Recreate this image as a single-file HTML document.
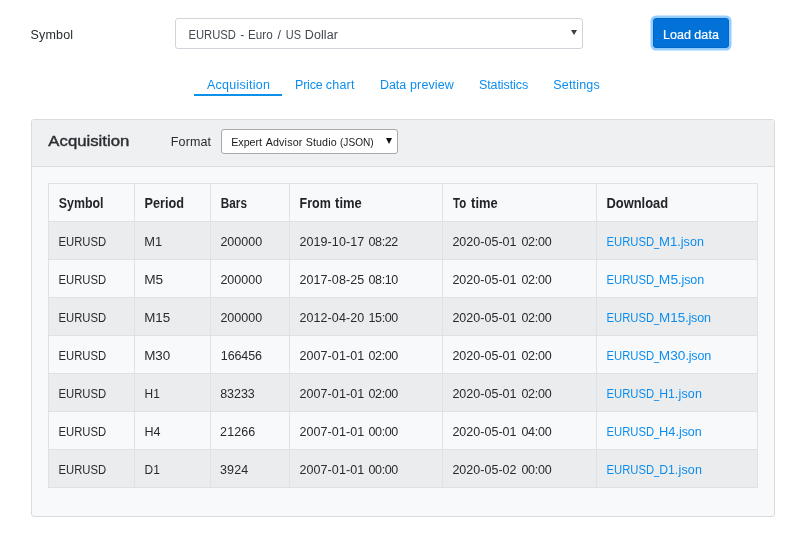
<!DOCTYPE html>
<html lang="en">
<head>
<meta charset="utf-8">
<title>Historical data</title>
<style>
*{box-sizing:border-box}
html,body{margin:0;padding:0}
body{width:806px;height:536px;background:#fff;will-change:transform;font-family:"Liberation Sans",sans-serif;font-size:12.5px;color:#272b2f;position:relative;overflow:hidden}
.ln{white-space:pre;line-height:20px}
.s{display:inline}
.x{display:inline-block;transform-origin:0 50%}
form,nav,h5,label{margin:0;padding:0;display:block}
.top>*,.tabs>*,.card,.hd>*,table{position:absolute}
.lbl{left:0;top:25px}
.sel{left:175px;top:18px;width:408px;height:31px;border:1px solid #ced4da;border-radius:3px;background:#fff;padding-top:6px;color:#424950}
.arr{position:absolute;right:5px;top:11px;width:0;height:0;border-left:3px solid transparent;border-right:3px solid transparent;border-top:5.5px solid #3b4046}
.btn{left:653px;top:18px;width:76px;height:30px;border:1px solid #0068c9;border-radius:3px;background:#0272d8;color:#fff;-webkit-text-stroke:.2px #fff;padding-top:6px;box-shadow:0 0 0 2.5px rgba(45,155,255,.5)}
.tab{top:70px;height:26px;padding-top:5px;color:#0b8df0;border-bottom:2px solid transparent}
.tab.on{border-bottom-color:#0c90ea}
.t1{left:194px;width:88px}
.t2{left:282px;width:85px}
.t3{left:367px;width:100px}
.t4{left:467px;width:74px}
.t5{left:541px;width:72px}
.card{left:31px;top:119px;width:744px;height:398px;border:1px solid #d9dbdd;border-radius:3px;background:#f8f9fa}
.hd{position:absolute;left:0;top:0;right:0;height:47px;background:#eff0f1;border-bottom:1px solid #d9dbdd;border-radius:2px 2px 0 0}
.ttl{left:0;top:11px;font-size:15px;font-weight:400;color:#2a2e32;-webkit-text-stroke:.4px #2a2e32}
.fl{left:0;top:12px}
.fsel{left:189px;top:9px;width:177px;height:25px;border:1px solid #a9a9a9;border-radius:3px;background:#fff;font-size:10.7px;padding-top:2px;color:#1a1a1a}
.fsel .arr{right:5px;top:8px;border-left-width:3.2px;border-right-width:3.2px;border-top:6px solid #111}
table{left:16px;top:63px;width:709px;border-collapse:collapse;table-layout:fixed}
.c1{width:86px}.c2{width:76px}.c3{width:79px}.c4{width:153px}.c5{width:154px}.c6{width:161px}
th,td{border:1px solid #dee2e6;height:38px;padding:10px 0 0 0;text-align:left;vertical-align:top}
th{font-weight:700;color:#212529;font-size:13.8px}
tbody tr:nth-child(odd){background:#ebeced}
a{color:#0b8df0;text-decoration:none}
</style>
</head>
<body>
<form class="top">
  <label class="lbl ln"><span class="s" style="letter-spacing:0.17px;margin-left:30.56px">Symbol</span></label>
  <div class="sel ln"><span class="s x" style="transform:translateX(0.52px) scaleX(0.898);margin-left:12.24px">EURUSD </span><span class="s x" style="transform:translateX(0.36px) scaleX(0.953);margin-left:-4.38px">- </span><span class="s x" style="transform:scaleX(0.933);margin-left:0.24px">Euro </span><span class="s" style="margin-left:-0.34px">/ </span><span class="s x" style="transform:translateX(1.82px) scaleX(0.878);margin-left:-0.33px">US </span><span class="s" style="letter-spacing:0.1px;margin-left:-0.28px">Dollar</span><i class="arr"></i></div>
  <div class="btn ln"><span class="s" style="letter-spacing:0.04px;margin-left:9px">Load </span><span class="s" style="letter-spacing:0.12px;margin-left:-0.23px">data</span></div>
</form>
<nav class="tabs">
  <a class="tab ln t1 on"><span class="s" style="letter-spacing:0.24px;margin-left:13.04px">Acquisition</span></a>
  <a class="tab ln t2"><span class="s" style="letter-spacing:-0.21px;margin-left:13.04px">Price </span><span class="s" style="letter-spacing:0.19px;margin-left:0.1px">chart</span></a>
  <a class="tab ln t3"><span class="s" style="letter-spacing:-0.08px;margin-left:12.97px">Data </span><span class="s" style="letter-spacing:0.1px;margin-left:0.61px">preview</span></a>
  <a class="tab ln t4"><span class="s" style="letter-spacing:-0.08px;margin-left:11.91px">Statistics</span></a>
  <a class="tab ln t5"><span class="s" style="letter-spacing:0.16px;margin-left:12.37px">Settings</span></a>
</nav>
<section class="card">
  <header class="hd">
    <h5 class="ttl ln"><span class="s x" style="transform:translateX(0.36px) scaleX(1.115);margin-left:16px">Acquisition</span></h5>
    <label class="fl ln"><span class="s" style="letter-spacing:0.12px;margin-left:138.83px">Format</span></label>
    <div class="fsel ln"><span class="s" style="letter-spacing:-0.02px;margin-left:9.24px">Expert </span><span class="s" style="letter-spacing:0.16px;margin-left:0.78px">Advisor </span><span class="s" style="letter-spacing:0.14px;margin-left:0.05px">Studio </span><span class="s x" style="transform:translateX(-0.03px) scaleX(0.946)">(JSON)</span><i class="arr"></i></div>
  </header>
  <table>
    <colgroup><col class="c1"><col class="c2"><col class="c3"><col class="c4"><col class="c5"><col class="c6"></colgroup>
    <thead><tr><th class="ln"><span class="s x" style="transform:translateX(-0.21px) scaleX(0.897);margin-left:9.76px">Symbol</span></th><th class="ln"><span class="s x" style="transform:translateX(0.55px) scaleX(0.920);margin-left:9.49px">Period</span></th><th class="ln"><span class="s x" style="transform:translateX(-0.19px) scaleX(0.851);margin-left:9.78px">Bars</span></th><th class="ln"><span class="s x" style="transform:translateX(0.56px) scaleX(0.905);margin-left:9.43px">From </span><span class="s x" style="transform:translateX(0.06px) scaleX(0.941);margin-left:-2.42px">time</span></th><th class="ln"><span class="s x" style="transform:translateX(0.04px) scaleX(0.823);margin-left:10.11px">To </span><span class="s x" style="transform:translateX(-0.88px) scaleX(0.935);margin-left:-1.29px">time</span></th><th class="ln"><span class="s x" style="transform:translateX(0.42px) scaleX(0.936);margin-left:9.19px">Download</span></th></tr></thead>
    <tbody>
      <tr><td class="ln"><span class="s x" style="transform:translateX(0.53px) scaleX(0.903);margin-left:9.34px">EURUSD</span></td><td class="ln"><span class="s x" style="transform:translateX(0.16px) scaleX(1.030);margin-left:9.14px">M1</span></td><td class="ln"><span class="s" style="margin-left:9.38px">200000</span></td><td class="ln"><span class="s" style="letter-spacing:0.1px;margin-left:9.38px">2019-10-17 </span><span class="s" style="letter-spacing:-0.37px;margin-left:0.59px">08:22</span></td><td class="ln"><span class="s" style="letter-spacing:0.02px;margin-left:9.38px">2020-05-01 </span><span class="s" style="letter-spacing:-0.22px;margin-left:1.39px">02:00</span></td><td class="ln"><a><span class="s x" style="transform:translateX(0.5px) scaleX(0.902);margin-left:9.24px">EURUSD</span><span class="s x" style="transform:translateX(0.12px) scaleX(0.746);margin-left:-5.08px">_</span><span class="s x" style="transform:translateX(-0.06px) scaleX(1.052);margin-left:-2.05px">M1</span><span class="s" style="letter-spacing:0.06px;margin-left:0.97px">.json</span></a></td></tr>
      <tr><td class="ln"><span class="s x" style="transform:translateX(0.53px) scaleX(0.903);margin-left:9.34px">EURUSD</span></td><td class="ln"><span class="s x" style="transform:translateX(0.15px) scaleX(1.091);margin-left:9.14px">M5</span></td><td class="ln"><span class="s" style="margin-left:9.38px">200000</span></td><td class="ln"><span class="s" style="letter-spacing:0.1px;margin-left:9.38px">2017-08-25 </span><span class="s" style="letter-spacing:-0.37px;margin-left:0.59px">08:10</span></td><td class="ln"><span class="s" style="letter-spacing:0.02px;margin-left:9.38px">2020-05-01 </span><span class="s" style="letter-spacing:-0.22px;margin-left:1.39px">02:00</span></td><td class="ln"><a><span class="s x" style="transform:translateX(0.5px) scaleX(0.902);margin-left:9.24px">EURUSD</span><span class="s x" style="transform:translateX(0.12px) scaleX(0.746);margin-left:-5.08px">_</span><span class="s x" style="transform:translateX(-0.14px) scaleX(1.107);margin-left:-2.05px">M5</span><span class="s" style="letter-spacing:-0.09px;margin-left:1.85px">.json</span></a></td></tr>
      <tr><td class="ln"><span class="s x" style="transform:translateX(0.53px) scaleX(0.903);margin-left:9.34px">EURUSD</span></td><td class="ln"><span class="s x" style="transform:translateX(0.16px) scaleX(1.067);margin-left:9.14px">M15</span></td><td class="ln"><span class="s" style="margin-left:9.38px">200000</span></td><td class="ln"><span class="s" style="letter-spacing:0.1px;margin-left:9.38px">2012-04-20 </span><span class="s" style="letter-spacing:-0.37px;margin-left:0.59px">15:00</span></td><td class="ln"><span class="s" style="letter-spacing:0.02px;margin-left:9.38px">2020-05-01 </span><span class="s" style="letter-spacing:-0.22px;margin-left:1.39px">02:00</span></td><td class="ln"><a><span class="s x" style="transform:translateX(0.5px) scaleX(0.902);margin-left:9.24px">EURUSD</span><span class="s x" style="transform:translateX(0.12px) scaleX(0.746);margin-left:-5.08px">_</span><span class="s x" style="transform:translateX(0.02px) scaleX(1.073);margin-left:-2.05px">M15</span><span class="s" style="letter-spacing:-0.17px;margin-left:2px">.json</span></a></td></tr>
      <tr><td class="ln"><span class="s x" style="transform:translateX(0.53px) scaleX(0.903);margin-left:9.34px">EURUSD</span></td><td class="ln"><span class="s x" style="transform:translateX(0.21px) scaleX(1.072);margin-left:9.14px">M30</span></td><td class="ln"><span class="s" style="letter-spacing:-0.1px;margin-left:9.8px">166456</span></td><td class="ln"><span class="s" style="letter-spacing:0.1px;margin-left:9.38px">2007-01-01 </span><span class="s" style="letter-spacing:-0.37px;margin-left:0.59px">02:00</span></td><td class="ln"><span class="s" style="letter-spacing:0.02px;margin-left:9.38px">2020-05-01 </span><span class="s" style="letter-spacing:-0.22px;margin-left:1.39px">02:00</span></td><td class="ln"><a><span class="s x" style="transform:translateX(0.5px) scaleX(0.902);margin-left:9.24px">EURUSD</span><span class="s x" style="transform:translateX(0.12px) scaleX(0.746);margin-left:-5.08px">_</span><span class="s x" style="transform:translateX(-0.13px) scaleX(1.091);margin-left:-2.05px">M30</span><span class="s" style="letter-spacing:-0.17px;margin-left:2.28px">.json</span></a></td></tr>
      <tr><td class="ln"><span class="s x" style="transform:translateX(0.53px) scaleX(0.903);margin-left:9.34px">EURUSD</span></td><td class="ln"><span class="s x" style="transform:translateX(0.6px) scaleX(0.953);margin-left:9.34px">H1</span></td><td class="ln"><span class="s" style="letter-spacing:-0.04px;margin-left:9.17px">83233</span></td><td class="ln"><span class="s" style="letter-spacing:0.1px;margin-left:9.38px">2007-01-01 </span><span class="s" style="letter-spacing:-0.37px;margin-left:0.59px">02:00</span></td><td class="ln"><span class="s" style="letter-spacing:0.02px;margin-left:9.38px">2020-05-01 </span><span class="s" style="letter-spacing:-0.22px;margin-left:1.39px">02:00</span></td><td class="ln"><a><span class="s x" style="transform:translateX(0.5px) scaleX(0.902);margin-left:9.24px">EURUSD</span><span class="s x" style="transform:translateX(0.12px) scaleX(0.746);margin-left:-5.08px">_</span><span class="s x" style="transform:translateX(0.16px) scaleX(0.976);margin-left:-2.05px">H1</span><span class="s" style="letter-spacing:0.17px;margin-left:0.02px">.json</span></a></td></tr>
      <tr><td class="ln"><span class="s x" style="transform:translateX(0.53px) scaleX(0.903);margin-left:9.34px">EURUSD</span></td><td class="ln"><span class="s x" style="transform:translateX(0.51px) scaleX(1.002);margin-left:9.34px">H4</span></td><td class="ln"><span class="s" style="letter-spacing:0.13px;margin-left:9.06px">21266</span></td><td class="ln"><span class="s" style="letter-spacing:0.1px;margin-left:9.38px">2007-01-01 </span><span class="s" style="letter-spacing:-0.37px;margin-left:0.59px">00:00</span></td><td class="ln"><span class="s" style="letter-spacing:0.02px;margin-left:9.38px">2020-05-01 </span><span class="s" style="letter-spacing:-0.22px;margin-left:1.39px">04:00</span></td><td class="ln"><a><span class="s x" style="transform:translateX(0.5px) scaleX(0.902);margin-left:9.24px">EURUSD</span><span class="s x" style="transform:translateX(0.12px) scaleX(0.746);margin-left:-5.08px">_</span><span class="s x" style="transform:translateX(-0.01px) scaleX(1.023);margin-left:-2.05px">H4</span><span class="s" style="letter-spacing:-0.07px;margin-left:0.71px">.json</span></a></td></tr>
      <tr><td class="ln"><span class="s x" style="transform:translateX(0.53px) scaleX(0.903);margin-left:9.34px">EURUSD</span></td><td class="ln"><span class="s x" style="transform:translateX(0.6px) scaleX(0.953);margin-left:9.34px">D1</span></td><td class="ln"><span class="s" style="letter-spacing:0.1px;margin-left:9.05px">3924</span></td><td class="ln"><span class="s" style="letter-spacing:0.1px;margin-left:9.38px">2007-01-01 </span><span class="s" style="letter-spacing:-0.37px;margin-left:0.59px">00:00</span></td><td class="ln"><span class="s" style="letter-spacing:0.02px;margin-left:9.38px">2020-05-02 </span><span class="s" style="letter-spacing:-0.22px;margin-left:1.39px">00:00</span></td><td class="ln"><a><span class="s x" style="transform:translateX(0.5px) scaleX(0.902);margin-left:9.24px">EURUSD</span><span class="s x" style="transform:translateX(0.12px) scaleX(0.746);margin-left:-5.08px">_</span><span class="s x" style="transform:translateX(0.16px) scaleX(0.976);margin-left:-2.05px">D1</span><span class="s" style="letter-spacing:0.17px;margin-left:0.02px">.json</span></a></td></tr>
    </tbody>
  </table>
</section>
</body>
</html>
